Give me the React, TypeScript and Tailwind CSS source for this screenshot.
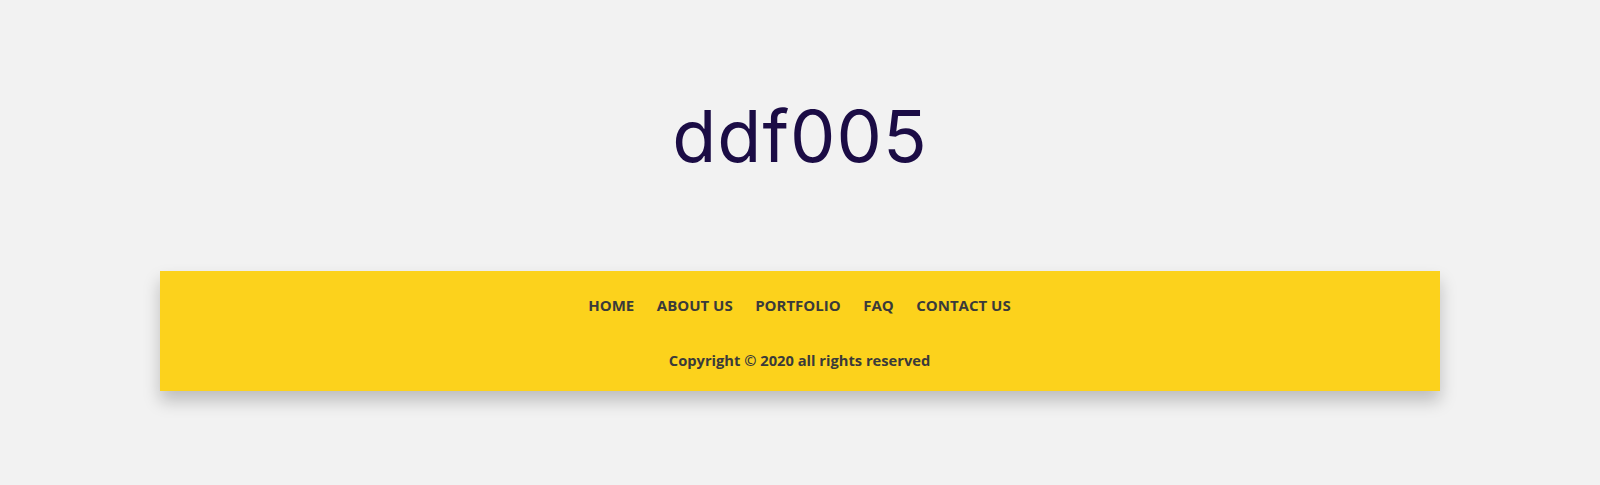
export default function App() {
  const links = ["HOME", "ABOUT US", "PORTFOLIO", "FAQ", "CONTACT US"];
  return (
    <div className="w-full h-[485px] bg-[#f2f2f2] flex flex-col items-center">
      <h1
        className="mt-[92px] h-[88px] text-[72px] leading-[88px] text-[#1b0c45] font-normal tracking-[1px]"
        style={{ fontFamily: "Inter, 'Open Sans', sans-serif" }}
      >
        ddf005
      </h1>
      <footer
        className="mt-[91px] mr-[1px] w-[1280px] h-[120px] bg-[#fcd21c] shadow-[0_10px_16px_rgba(0,0,0,0.22)] flex flex-col items-center text-[#3a3a3a]"
        style={{ fontFamily: "'Open Sans', 'Liberation Sans', sans-serif" }}
      >
        <nav className="mt-[23px] flex gap-[22.5px] text-[15px] leading-[22px] font-bold">
          {links.map((l) => (
            <a key={l} href="#">
              {l}
            </a>
          ))}
        </nav>
        <p className="mt-[34px] text-[14.7px] leading-[20px] font-bold">
          Copyright © 2020 all rights reserved
        </p>
      </footer>
    </div>
  );
}
